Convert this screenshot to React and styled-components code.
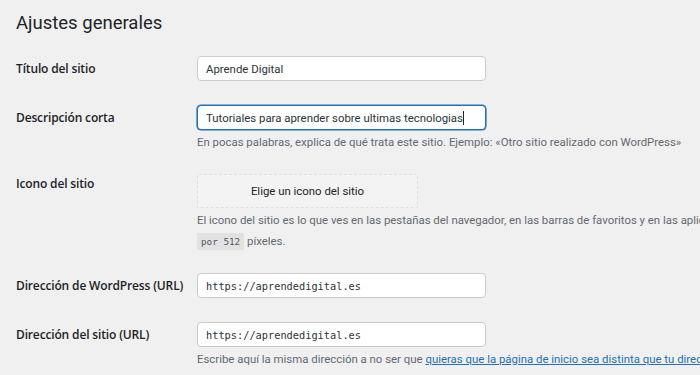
import React from "react";
import styled, { createGlobalStyle } from "styled-components";

const Global = createGlobalStyle`
  html, body { margin: 0; padding: 0; }
  body {
    background: #f0f0f1;
    color: #1d2327;
    font-family: Roboto, "Open Sans", sans-serif;
    overflow: hidden;
    width: 700px;
    height: 375px;
  }
`;

const Page = styled.div`
  padding: 9px 0 0 16px;
  width: 1100px;
`;

const Title = styled.h1`
  margin: 0 0 18px;
  font-size: 18.5px;
  font-weight: 400;
  line-height: 29px;
  color: #1d2327;
`;

const Row = styled.div`
  display: grid;
  grid-template-columns: 181px 1fr;
  align-items: start;
  margin-bottom: 24px;
`;

const Label = styled.div`
  font-family: "Open Sans", sans-serif;
  font-size: 12px;
  font-weight: 600;
  letter-spacing: -0.15px;
  line-height: ${(p) => p.$lh || 25}px;
  color: #1d2327;
  white-space: nowrap;
`;

const Cell = styled.div`
  display: flex;
  flex-direction: column;
  align-items: flex-start;
`;

const Field = styled.div`
  box-sizing: border-box;
  width: 289px;
  height: 25px;
  padding: 0 8px;
  background: #fff;
  border: 1px solid ${(p) => (p.$focused ? "#2271b1" : "#c9cbcf")};
  box-shadow: ${(p) => (p.$focused ? "0 0 0 0.6px #2271b1" : "none")};
  border-radius: 4px;
  display: flex;
  align-items: center;
  font-size: 11.4px;
  color: #2c3338;
  white-space: nowrap;
  font-family: ${(p) =>
    p.$mono ? '"DejaVu Sans Mono", "Liberation Mono", monospace' : "inherit"};
  ${(p) => p.$mono && "font-size: 10.3px;"}
`;

const Caret = styled.span`
  display: inline-block;
  width: 1px;
  height: 14px;
  background: #1d2327;
`;

const IconButton = styled.button`
  box-sizing: border-box;
  width: 221px;
  height: 34px;
  background: #f3f3f4;
  border: 1px dashed #dfdfe1;
  border-radius: 2px;
  font-family: inherit;
  font-size: 11.4px;
  color: #1d2327;
  padding: 0;
  cursor: pointer;
`;

const Desc = styled.p`
  margin: 2px 0 -3px;
  font-size: 11.4px;
  line-height: 21px;
  color: #646970;
  white-space: nowrap;
`;

const Code = styled.code`
  font-family: "DejaVu Sans Mono", "Liberation Mono", monospace;
  font-size: 9.3px;
  background: #e2e2e3;
  color: #50575e;
  padding: 3px 4px 3px;
`;

const Link = styled.a`
  color: #2271b1;
  text-decoration: underline;
`;

export default function App() {
  return (
    <>
      <Global />
      <Page>
        <Title>Ajustes generales</Title>

        <Row>
          <Label>Título del sitio</Label>
          <Cell>
            <Field>Aprende Digital</Field>
          </Cell>
        </Row>

        <Row>
          <Label>Descripción corta</Label>
          <Cell>
            <Field $focused>
              Tutoriales para aprender sobre ultimas tecnologias
              <Caret />
            </Field>
            <Desc>
              En pocas palabras, explica de qué trata este sitio. Ejemplo: «Otro sitio realizado con WordPress»
            </Desc>
          </Cell>
        </Row>

        <Row>
          <Label $lh={20}>Icono del sitio</Label>
          <Cell>
            <IconButton type="button">Elige un icono del sitio</IconButton>
            <Desc>
              El icono del sitio es lo que ves en las pestañas del navegador, en las barras de favoritos y en las aplicaciones móviles de WordPress. Debe ser cuadrado y de al menos <Code>512</Code>
              <br />
              <Code>por 512</Code> píxeles.
            </Desc>
          </Cell>
        </Row>

        <Row>
          <Label>Dirección de WordPress (URL)</Label>
          <Cell>
            <Field $mono>https://aprendedigital.es</Field>
          </Cell>
        </Row>

        <Row>
          <Label>Dirección del sitio (URL)</Label>
          <Cell>
            <Field $mono>https://aprendedigital.es</Field>
            <Desc>
              Escribe aquí la misma dirección a no ser que{" "}
              <Link href="#">quieras que la página de inicio sea distinta que tu dirección de instalación de WordPress</Link>.
            </Desc>
          </Cell>
        </Row>
      </Page>
    </>
  );
}
